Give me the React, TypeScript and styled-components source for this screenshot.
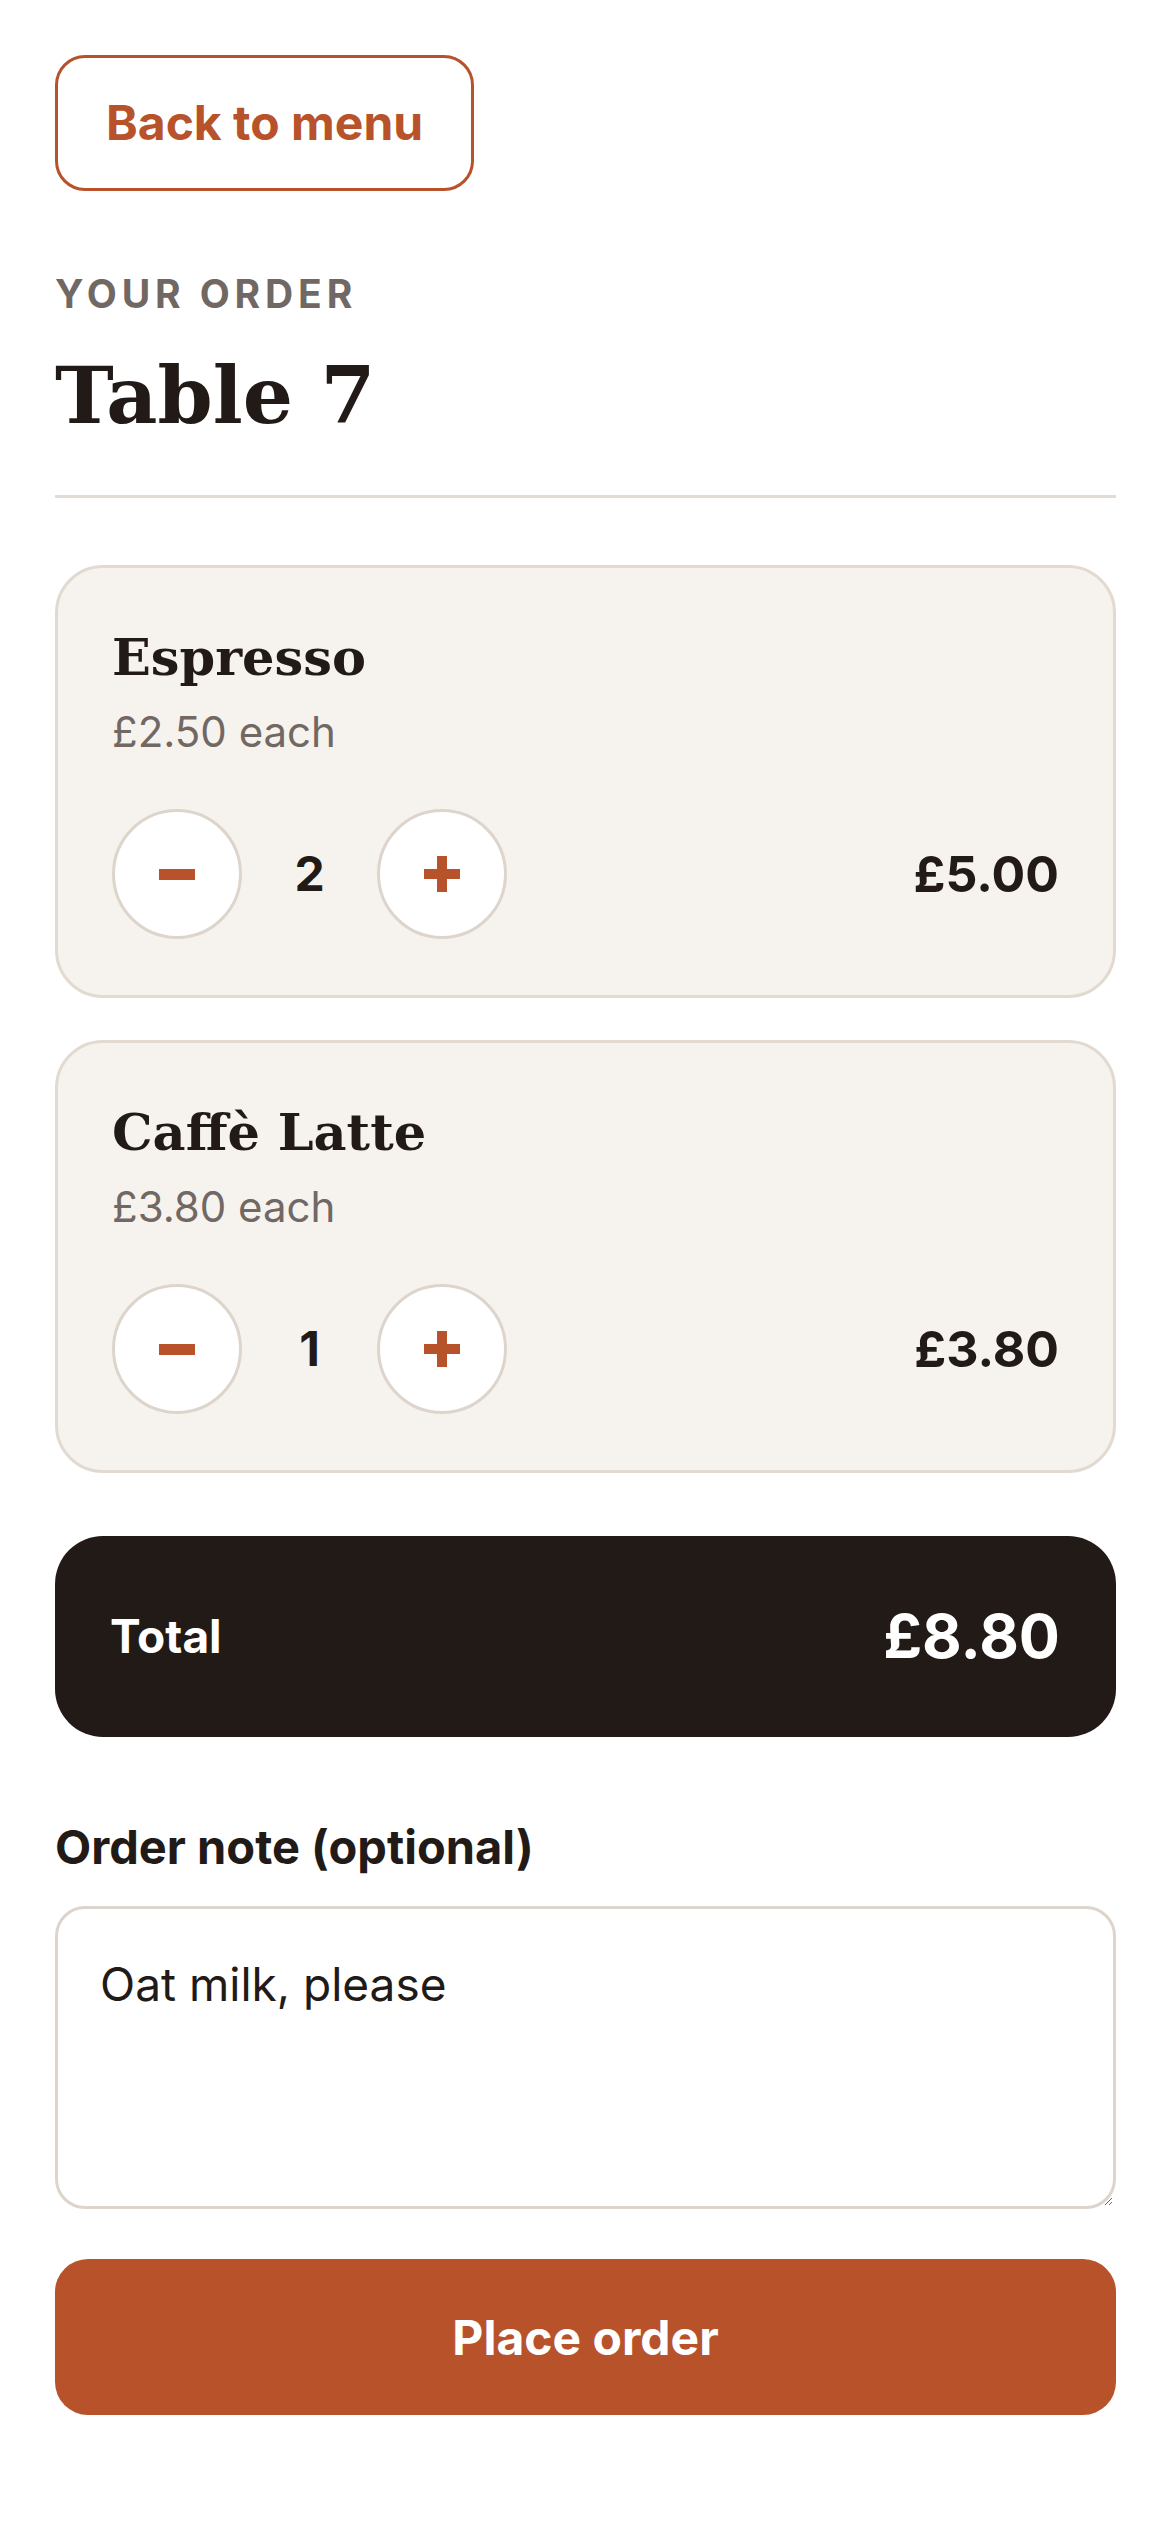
import React, { useState } from 'react';
import styled, { createGlobalStyle } from 'styled-components';

const GlobalStyle = createGlobalStyle`
	* {
		box-sizing: border-box;
	}

	body {
		margin: 0;
		background: #ffffff;
		color: #221a17;
		font-family: Inter, 'Noto Sans', 'Liberation Sans', sans-serif;
	}
`;

interface iItem {
	id: string;
	name: string;
	price: number;
	qty: number;
}

const initialItems: iItem[] = [
	{ id: 'espresso', name: 'Espresso', price: 2.5, qty: 2 },
	{ id: 'latte', name: 'Caffè Latte', price: 3.8, qty: 1 },
];

const money = (value: number) => `£${value.toFixed(2)}`;

const MinusIcon = () => (
	<svg width='36' height='36' viewBox='0 0 36 36' aria-hidden='true'>
		<rect x='0' y='13' width='36' height='11' fill='currentColor' />
	</svg>
);

const PlusIcon = () => (
	<svg width='36' height='36' viewBox='0 0 36 36' aria-hidden='true'>
		<rect x='0' y='13' width='36' height='10' fill='currentColor' />
		<rect x='13' y='0' width='10' height='36' fill='currentColor' />
	</svg>
);

const App = () => {
	const [items, setItems] = useState<iItem[]>(initialItems);

	const changeQty = (id: string, delta: number) => {
		setItems((prev) =>
			prev.map((item) =>
				item.id === id ? { ...item, qty: Math.max(0, item.qty + delta) } : item
			)
		);
	};

	const total = items.reduce((sum, item) => sum + item.price * item.qty, 0);

	return (
		<>
			<GlobalStyle />
			<Page>
				<BackButton type='button'>Back to menu</BackButton>

				<Header>
					<Eyebrow>Your order</Eyebrow>
					<Title>Table 7</Title>
				</Header>

				<ItemList>
					{items.map((item) => (
						<ItemCard key={item.id}>
							<ItemName>{item.name}</ItemName>
							<ItemPrice>{money(item.price)} each</ItemPrice>
							<Controls>
								<Stepper>
									<RoundButton
										type='button'
										aria-label={`Remove one ${item.name}`}
										onClick={() => changeQty(item.id, -1)}
									>
										<MinusIcon />
									</RoundButton>
									<Qty>{item.qty}</Qty>
									<RoundButton
										type='button'
										aria-label={`Add one ${item.name}`}
										onClick={() => changeQty(item.id, 1)}
									>
										<PlusIcon />
									</RoundButton>
								</Stepper>
								<LineTotal>{money(item.price * item.qty)}</LineTotal>
							</Controls>
						</ItemCard>
					))}
				</ItemList>

				<TotalBar>
					<TotalLabel>Total</TotalLabel>
					<TotalAmount>{money(total)}</TotalAmount>
				</TotalBar>

				<NoteLabel htmlFor='order-note'>Order note (optional)</NoteLabel>
				<NoteField id='order-note' defaultValue='Oat milk, please' />

				<PlaceOrder type='button'>Place order</PlaceOrder>
			</Page>
		</>
	);
};

const Page = styled.main`
	display: flex;
	flex-direction: column;
	padding: 55px 54px 110px 55px;
`;

const BackButton = styled.button`
	align-self: flex-start;
	padding: 36px 48px;
	border: 3px solid #b8522a;
	border-radius: 30px;
	background: #ffffff;
	color: #b8522a;
	font-family: inherit;
	font-size: 48px;
	font-weight: 700;
	line-height: 58px;
	cursor: pointer;
`;

const Header = styled.header`
	margin-top: 80px;
	padding-bottom: 55px;
	border-bottom: 3px solid #e3dcd5;
`;

const Eyebrow = styled.div`
	color: #716864;
	font-size: 39px;
	font-weight: 700;
	line-height: 1.2;
	letter-spacing: 0.125em;
	text-transform: uppercase;
`;

const Title = styled.h1`
	margin: 35px 0 0;
	color: #221a17;
	font-family: 'DejaVu Serif', 'Liberation Serif', serif;
	font-size: 79px;
	font-weight: 700;
	line-height: 1.1;
`;

const ItemList = styled.section`
	display: flex;
	flex-direction: column;
	gap: 42px;
	margin-top: 67px;
`;

const ItemCard = styled.article`
	padding: 59px 54px 56px;
	border: 3px solid #e2dad1;
	border-radius: 48px;
	background: #f6f3ee;
`;

const ItemName = styled.h2`
	margin: 0;
	color: #221a17;
	font-family: 'DejaVu Serif', 'Liberation Serif', serif;
	font-size: 51px;
	font-weight: 700;
	line-height: 1.2;
`;

const ItemPrice = styled.div`
	margin-top: 15px;
	color: #716864;
	font-size: 42px;
	line-height: 1.4;
`;

const Controls = styled.div`
	display: flex;
	align-items: center;
	justify-content: space-between;
	margin-top: 47px;
`;

const Stepper = styled.div`
	display: flex;
	align-items: center;
	gap: 33px;
`;

const RoundButton = styled.button`
	display: flex;
	align-items: center;
	justify-content: center;
	width: 130px;
	height: 130px;
	padding: 0;
	border: 3px solid #ddd5cc;
	border-radius: 50%;
	background: #ffffff;
	color: #b8522a;
	cursor: pointer;
`;

const Qty = styled.span`
	min-width: 69px;
	color: #221a17;
	font-size: 48px;
	font-weight: 700;
	text-align: center;
`;

const LineTotal = styled.span`
	color: #221a17;
	font-size: 50px;
	font-weight: 700;
`;

const TotalBar = styled.div`
	display: flex;
	align-items: center;
	justify-content: space-between;
	height: 201px;
	margin-top: 63px;
	padding: 0 56px 0 55px;
	border-radius: 48px;
	background: #221a17;
	color: #ffffff;
`;

const TotalLabel = styled.span`
	font-size: 46px;
	font-weight: 700;
`;

const TotalAmount = styled.span`
	font-size: 61px;
	font-weight: 700;
`;

const NoteLabel = styled.label`
	display: block;
	margin-top: 82px;
	color: #221a17;
	font-size: 47px;
	font-weight: 700;
	line-height: 1.2;
`;

const NoteField = styled.textarea`
	display: block;
	width: 100%;
	height: 303px;
	margin-top: 31px;
	padding: 42px;
	border: 3px solid #ddd5cc;
	border-radius: 30px;
	background: #ffffff;
	color: #221a17;
	font-family: inherit;
	font-size: 46px;
	line-height: 1.45;
	resize: vertical;
	outline: none;
`;

const PlaceOrder = styled.button`
	height: 156px;
	margin-top: 50px;
	border: none;
	border-radius: 33px;
	background: #b8522a;
	color: #ffffff;
	font-family: inherit;
	font-size: 48px;
	font-weight: 700;
	cursor: pointer;
`;

export default App;
